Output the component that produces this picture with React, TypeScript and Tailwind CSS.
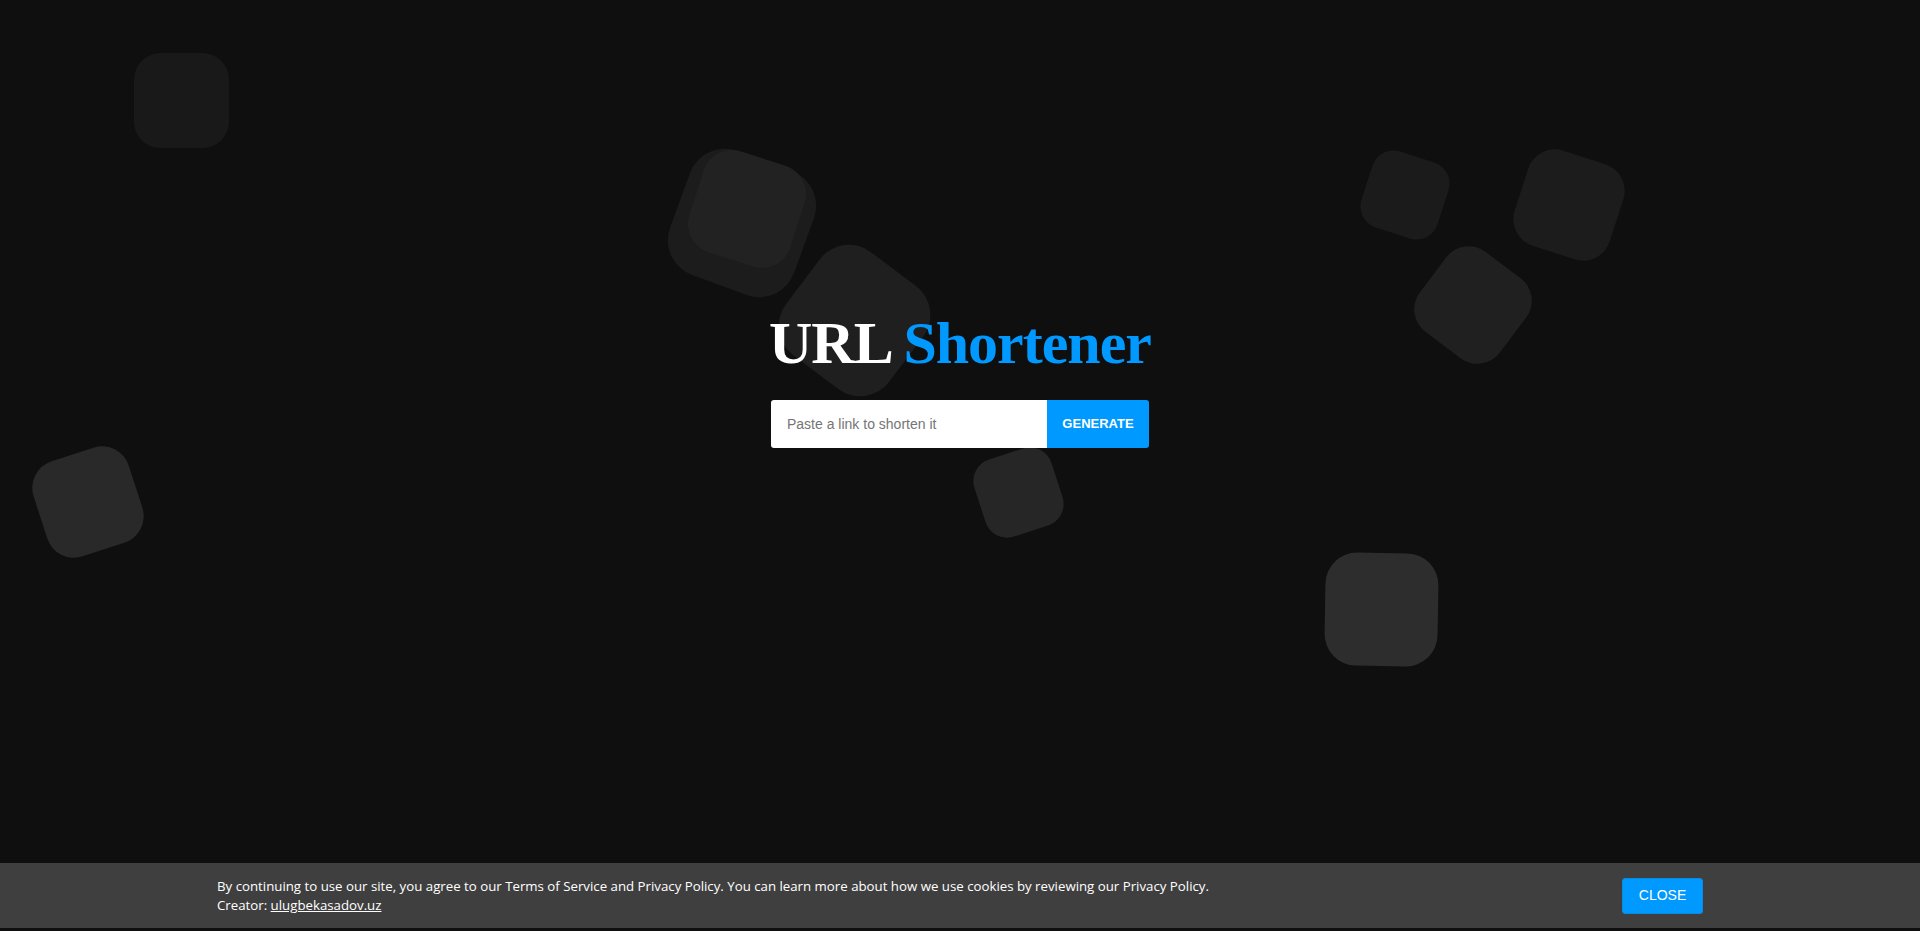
const shapes = [
  { c: 'left-[134px] top-[53px] h-[95px] w-[95px] rotate-0 bg-[#191919]' },
  { c: 'left-[676px] top-[157px] h-[132px] w-[132px] rotate-[20deg] bg-[#1c1c1c]' },
  { c: 'left-[694px] top-[156px] h-[106px] w-[106px] rotate-[18deg] bg-[#222222]' },
  { c: 'left-[790px] top-[256px] h-[129px] w-[129px] rotate-[37deg] bg-[#1f1f1f]' },
  { c: 'left-[978px] top-[452px] h-[81px] w-[81px] rotate-[-18deg] bg-[#262626]' },
  { c: 'left-[38px] top-[452px] h-[100px] w-[100px] rotate-[-18deg] bg-[#292929]' },
  { c: 'left-[1365px] top-[155px] h-[80px] w-[80px] rotate-[18deg] bg-[#1b1b1b]' },
  { c: 'left-[1519px] top-[155px] h-[100px] w-[100px] rotate-[18deg] bg-[#1c1c1c]' },
  { c: 'left-[1423px] top-[255px] h-[100px] w-[100px] rotate-[37deg] bg-[#202020]' },
  { c: 'left-[1325px] top-[553px] h-[113px] w-[113px] rotate-[1deg] bg-[#2d2d2d]' },
];

export default function App() {
  return (
    <div className="relative flex min-h-screen flex-col overflow-hidden bg-[#0f0f0f]">
      {shapes.map((s, i) => (
        <div key={i} className={`absolute rounded-[28%] ${s.c}`} />
      ))}

      <main className="relative z-10 flex flex-1 flex-col items-center pt-[313px]">
        <h1 className="font-['Liberation_Serif',serif] text-[60px] font-bold leading-[60px] tracking-[-1px] text-white">
          URL <span className="text-[#0099ff]">Shortener</span>
        </h1>
        <form className="mt-[27px] flex h-[48px] w-[378px]" onSubmit={(e) => e.preventDefault()}>
          <input
            type="text"
            placeholder="Paste a link to shorten it"
            className="h-full min-w-0 flex-1 rounded-l-[3px] bg-white pl-4 font-['Liberation_Sans',Arial,sans-serif] text-[14px] text-[#333] outline-none placeholder:text-[#757575]"
          />
          <button
            type="submit"
            className="h-full w-[102px] rounded-r-[3px] bg-[#0099ff] font-['Liberation_Sans',Arial,sans-serif] text-[13px] font-bold text-white"
          >
            GENERATE
          </button>
        </form>
      </main>

      <footer className="relative z-10 mb-[3px] flex h-[65px] items-center justify-between bg-[#3f3f3f] px-[217px] font-['Open_Sans',sans-serif] text-[13.25px] leading-[19px] text-white">
        <p>
          By continuing to use our site, you agree to our Terms of Service and Privacy Policy. You can learn more about how we use cookies by reviewing our Privacy Policy.
          <br />
          Creator: <a href="#" className="underline">ulugbekasadov.uz</a>
        </p>
        <button className="h-[36px] w-[81px] rounded-[3px] border border-[#0a8ae0] bg-[#0099ff] font-['Liberation_Sans',Arial,sans-serif] text-[14px] text-white">
          CLOSE
        </button>
      </footer>
    </div>
  );
}
